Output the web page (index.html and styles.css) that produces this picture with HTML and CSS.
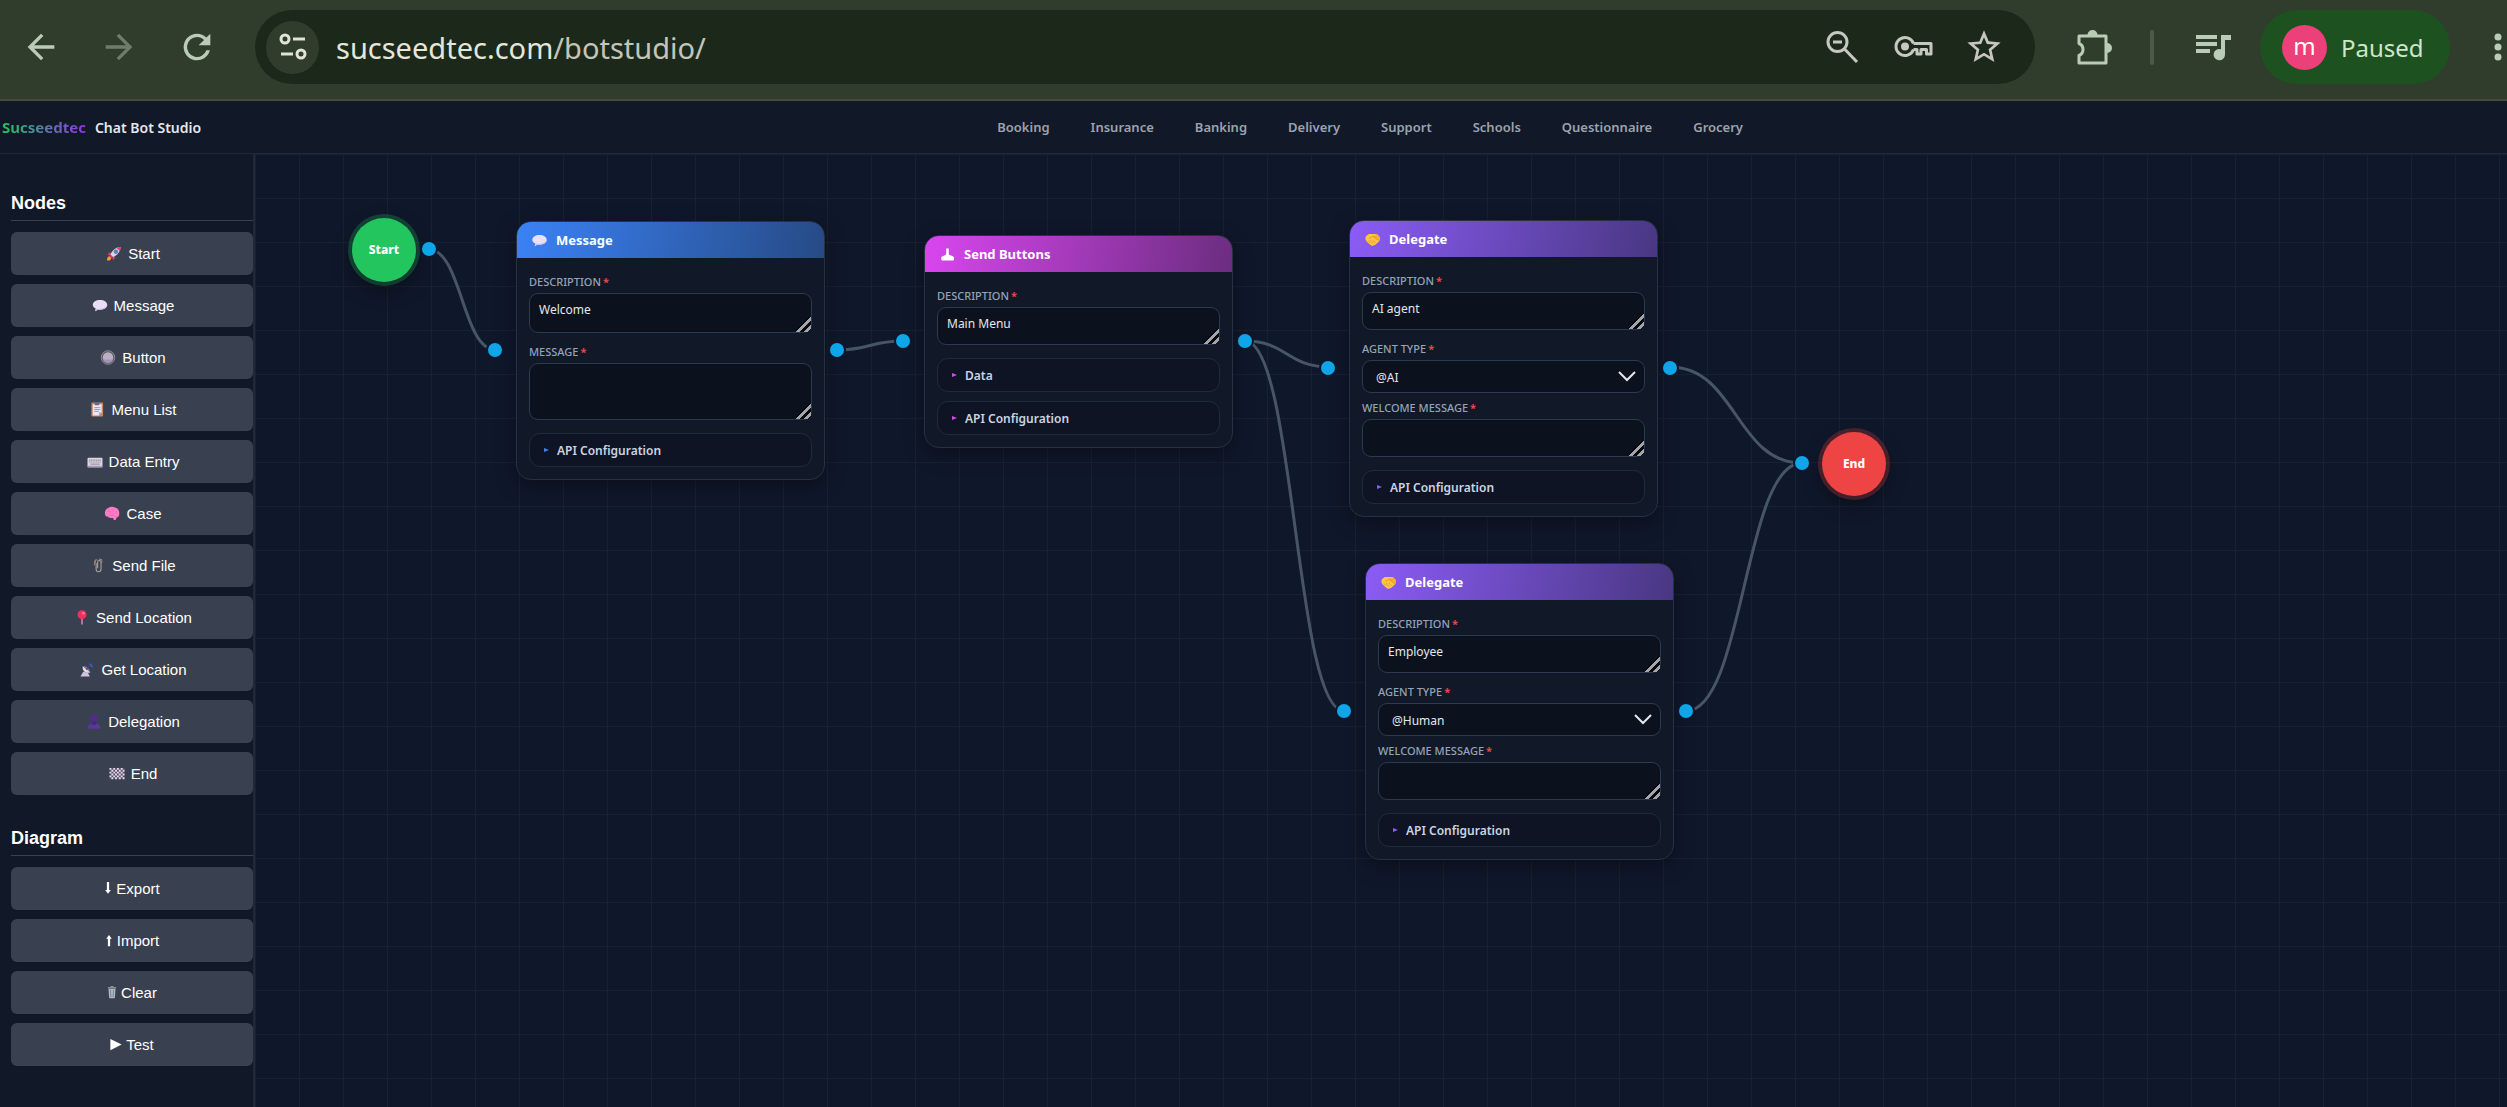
FILE: index.html
```
<!DOCTYPE html>
<html lang="en">
<head>
  <meta charset="UTF-8" />
  <meta name="viewport" content="width=device-width, initial-scale=1" />
  <title>Sucseedtec Chat Bot Studio</title>
  <link rel="stylesheet" href="styles.css">
</head>
<body>
  <!-- icon sprite -->
  <svg class="sprite" aria-hidden="true">
    <symbol id="i-rocket" viewBox="0 0 16 16">
      <path d="M4 6L1 9l3 1zM10 12l-3 3-1-3z" fill="#f0386b"/>
      <path d="M15 1c-5 0-8 3-11 8l3 3c5-3 8-6 8-11z" fill="#dcd3e6"/>
      <path d="M15 1c-2 0-3 .2-4.500.8l3.700 3.700C14.800 4 15 3 15 1z" fill="#f0386b"/>
      <circle cx="10" cy="6" r="2" fill="#3f8ee0" stroke="#6a5a8a" stroke-width=".6"/>
      <path d="M4 9l3 3-2 1-2-2z" fill="#e8306a"/>
      <path d="M3 11l2 2c-.5 2-2 2.500-4.500 2.500C.5 13 1 11.500 3 11z" fill="#ff9a2e"/>
    </symbol>
    <symbol id="i-speech" viewBox="0 0 16 16">
      <path d="M8 2c4.500 0 7.700 2.200 7.700 5.200S12.500 12.500 8 12.500c-.8 0-1.500 0-2.200-.2L3 14.200l.4-2.900C1.500 10.300.3 9 .3 7.200.3 4.200 3.500 2 8 2z" fill="#e9def5"/>
      <path d="M15.700 7.200c0 3-3.200 5.300-7.700 5.300-.8 0-1.500 0-2.200-.2L3 14.200l.4-2.900c4 1 9.600.2 12.300-4.100z" fill="#d3c2e6"/>
    </symbol>
    <symbol id="i-radio" viewBox="0 0 16 16">
      <circle cx="8" cy="8" r="7.200" fill="#5a5560" stroke="#938d99" stroke-width="1"/>
      <circle cx="8" cy="8" r="5.600" fill="#b9b1c2"/>
      <path d="M2.800 10a5.600 5.600 0 0 0 10.400 0z" fill="#a493b8"/>
    </symbol>
    <symbol id="i-clipboard" viewBox="0 0 16 16">
      <rect x="2" y=".5" width="12.500" height="15" rx="1" fill="#c98562"/>
      <path d="M3.500 2.500H13V11l-3 3.500H3.500z" fill="#ece6f4"/>
      <path d="M13 11l-3 3.500V11z" fill="#b9a6d0"/>
      <rect x="5.500" y="0" width="5" height="3.500" rx="1" fill="#6d6678"/>
      <path d="M5 6h6.500M5 8h6.500M5 10h5" stroke="#9d93ad" stroke-width="1"/>
    </symbol>
    <symbol id="i-keyboard" viewBox="0 0 16 16">
      <rect x="0" y="4" width="16" height="10" rx="1" fill="#dcd6e2"/>
      <rect x="0" y="12.500" width="16" height="2" rx="1" fill="#a99abd"/>
      <path d="M1.500 6.500h13M1.500 8.500h13" stroke="#96909d" stroke-width="1.200" stroke-dasharray="1.400 .5"/>
      <path d="M3 10.800h10" stroke="#96909d" stroke-width="1.200"/>
    </symbol>
    <symbol id="i-brain" viewBox="0 0 16 16">
      <path d="M1 10C-.5 7 1 3 4 2c2-1.600 5-1.600 7-.4 3 .4 5 3.400 4.700 6.400.3 2.500-1 4-3 4.400L12 15h-2l-.8-2.300C6 13.500 4 12 3.500 11.200 2.500 11.300 1.500 11 1 10z" fill="#ff7cc6"/>
      <path d="M3 6c1.500-1.500 3-.5 3.500.5M8 3.500c1.500 0 2 1 1.500 2.500M12 5c1 1 1 2.500-.5 3M5 9.500c2 1 4-.5 5 .5M11 11c1 .6 2 .3 2.500-.5" fill="none" stroke="#e860b0" stroke-width=".8"/>
    </symbol>
    <symbol id="i-clips" viewBox="0 0 16 16">
      <path d="M6 5.500V12a2.600 2.600 0 0 0 5.200 0V4.500a1.800 1.800 0 0 0-3.600 0V11" fill="none" stroke="#a8a09b" stroke-width="1.200"/>
      <path d="M4 7.500L5 2.500a1.500 1.500 0 0 1 2.500 0M9 1.200l3 .6v3.500" fill="none" stroke="#8b8480" stroke-width="1.200"/>
      <circle cx="5" cy="4" r="1" fill="#c4805d"/>
    </symbol>
    <symbol id="i-pin" viewBox="0 0 16 16">
      <path d="M8 9v6.500" stroke="#b9aac8" stroke-width="1.400"/>
      <circle cx="8" cy="5" r="4.800" fill="#f0305f"/>
      <circle cx="9.500" cy="3.500" r="1.500" fill="#ff7a98"/>
    </symbol>
    <symbol id="i-dish" viewBox="0 0 16 16">
      <path d="M1 15.500l3-5 5 1 2 4z" fill="#cfc2e0"/>
      <path d="M3.500 4.500c-1 5 3.500 8.500 8 6.500z" fill="#e4dcec"/>
      <path d="M3.500 4.500l8 6.500c-1-4-4-7-8-6.500z" fill="#8f80a8"/>
      <path d="M7 8l4-4" stroke="#4a4560" stroke-width="1.200"/>
      <path d="M10 1.500c2.500 0 4.500 2 4.500 4.500l-2-1-2-2z" fill="#2f63c9"/>
    </symbol>
    <symbol id="i-person" viewBox="0 0 16 16">
      <circle cx="8" cy="5" r="4.600" fill="#4f2f86"/>
      <path d="M.8 15.800c0-3.800 3-5.600 7.200-5.600s7.200 1.800 7.200 5.600z" fill="#5b3796"/>
      <rect x="6" y="8" width="4" height="3.500" fill="#43277a"/>
    </symbol>
    <symbol id="i-flag" viewBox="0 0 16 16">
      <rect y="2" width="16" height="12" fill="#5b5268"/>
      <path d="M0 3h16M0 7h16M0 11h16" stroke="#e3dcea" stroke-width="2" stroke-dasharray="2 2"/>
      <path d="M2 5h14M2 9h14M2 13h14" stroke="#e3dcea" stroke-width="2" stroke-dasharray="2 2"/>
    </symbol>
    <symbol id="i-hands" viewBox="0 0 16 16">
      <path d="M1 4.500L4 2h8.500l3 3c.6 1.800.2 3.600-.7 5.200L11 13.500l-3.500 1.300-3-2L1.300 9.500C.4 7.800.2 6 1 4.500z" fill="#ffc543"/>
      <path d="M12.500 2l3 3c.6 1.800.2 3.600-.7 5.200L8 5z" fill="#f5b02e"/>
      <path d="M4.500 7l3.500-2.500c2 0 3.500 2 5.500 4M3 9l2.500 2.500M5.500 8.500l3 4M8.500 8.500l2.500 3" fill="none" stroke="#e0902c" stroke-width=".8"/>
    </symbol>
    <symbol id="i-pointer" viewBox="0 0 16 16">
      <path d="M6.600 1.500h2.800V8l4.600 2.200c1.600.9 1.400 3.500 0 4.300H2.500C.8 13.700.8 11 2.400 10.200L6.600 8z" fill="#fff"/>
    </symbol>
    <symbol id="i-down" viewBox="0 0 6 16">
      <path d="M1.800 1h2.400v8.500H6l-3 4-3-4h1.800z" fill="#fff"/>
    </symbol>
    <symbol id="i-up" viewBox="0 0 6 16">
      <path d="M1.800 14h2.400V6H6L3 2 0 6h1.800z" fill="#fff"/>
    </symbol>
    <symbol id="i-trash" viewBox="0 0 10 16">
      <path d="M1.300 4h7.400L8 14H2z" fill="#b4bcc0"/>
      <path d="M.6 2.200h8.800v1.600H.6zM3.500 1h3v1.400h-3z" fill="#8a8f94"/>
      <path d="M3.500 5l.3 8M6.500 5l-.3 8" stroke="#5d8a98" stroke-width="1"/>
    </symbol>
    <symbol id="i-play" viewBox="0 0 12 16">
      <path d="M0 2l12 6-12 6z" fill="#fff"/>
    </symbol>
  </svg>

  <div class="browser-bar">
    <button class="bar-btn" aria-label="Back"><svg viewBox="0 0 24 24"><path d="M20 11H7.830l5.590-5.590L12 4l-8 8 8 8 1.410-1.410L7.830 13H20z"/></svg></button>
    <button class="bar-btn dim" aria-label="Forward"><svg viewBox="0 0 24 24"><path d="M12 4l-1.410 1.410L16.170 11H4v2h12.170l-5.580 5.590L12 20l8-8z"/></svg></button>
    <button class="bar-btn" aria-label="Reload"><svg viewBox="0 0 24 24"><path d="M17.650 6.350A7.960 7.960 0 0 0 12 4a8 8 0 1 0 7.730 10h-2.080A6 6 0 1 1 12 6c1.660 0 3.140.69 4.220 1.780L13 11h7V4z"/></svg></button>
    <div class="address">
      <button class="site-info" aria-label="Site information">
        <svg viewBox="0 0 28 28" fill="none" stroke="#dfe4d6" stroke-width="3"><circle cx="6" cy="6" r="4"/><path d="M14 6h12M2 21h12"/><circle cx="22" cy="21" r="4"/></svg>
      </button>
      <div class="url">sucseedtec.com<span>/botstudio/</span></div>
      <button class="bar-btn soft" aria-label="Zoom"><svg viewBox="0 0 40 40" fill="none" stroke="#c6c7c1" stroke-width="3"><circle cx="15.500" cy="15" r="9.500"/><path d="M22 21.500L35 35M11 15h9"/></svg></button>
      <button class="bar-btn soft" aria-label="Passwords"><svg viewBox="0 0 40 40" fill="none" stroke="#c6c7c1" stroke-width="3" stroke-linejoin="round"><path d="M20.500 16.500H38v10.500h-4.500v-4.500H28v4.500h-4v-4.500h-3.500"/><path d="M20.500 16.500a9 9 0 1 0 0 6"/><circle cx="12" cy="19.500" r="4" fill="#c6c7c1" stroke="none"/></svg></button>
      <button class="bar-btn soft" aria-label="Bookmark"><svg viewBox="0 0 24 24"><path d="M22 9.240l-7.190-.62L12 2 9.190 8.630 2 9.240l5.460 4.730L5.820 21 12 17.270 18.180 21l-1.630-7.030zM12 15.400l-3.760 2.270 1-4.280-3.320-2.880 4.380-.38L12 6.100l1.710 4.040 4.380.38-3.320 2.880 1 4.280z"/></svg></button>
    </div>
    <button class="bar-btn ext" aria-label="Extensions"><svg viewBox="0 0 40 40"><path d="M5 9h27v27H5v-7.500a6.500 6.500 0 0 0 0-12z" fill="none" stroke="#b9cdb6" stroke-width="3" stroke-linejoin="round"/><path d="M13.500 8a5 5 0 0 1 10 0zM33 16a5 5 0 0 1 0 10z"/></svg></button>
    <span class="bar-sep"></span>
    <button class="bar-btn media" aria-label="Media"><svg viewBox="0 0 40 40"><path d="M3 8h21v4H3zM3 15h21v4H3zM3 22h14v4H3z"/><path d="M28 8h10v5h-6v14.500a5.700 5.700 0 1 1-4-5.300z"/></svg></button>
    <button class="profile"><span class="avatar">m</span>Paused</button>
    <button class="kebab" aria-label="Menu"><svg viewBox="0 0 8 28"><circle cx="4" cy="4" r="3.500"/><circle cx="4" cy="14" r="3.500"/><circle cx="4" cy="24" r="3.500"/></svg></button>
  </div>

  <header class="topbar">
    <div class="brand"><span class="brand-name">Sucseedtec</span><span>Chat Bot Studio</span></div>
    <nav class="topnav">
      <a href="#">Booking</a>
      <a href="#">Insurance</a>
      <a href="#">Banking</a>
      <a href="#">Delivery</a>
      <a href="#">Support</a>
      <a href="#">Schools</a>
      <a href="#">Questionnaire</a>
      <a href="#">Grocery</a>
    </nav>
  </header>

  <div class="workspace">
    <aside class="sidebar">
      <h3>Nodes</h3>
      <div class="btn-list">
        <button><svg><use href="#i-rocket"/></svg>Start</button>
        <button><svg><use href="#i-speech"/></svg>Message</button>
        <button><svg><use href="#i-radio"/></svg>Button</button>
        <button><svg><use href="#i-clipboard"/></svg>Menu List</button>
        <button><svg><use href="#i-keyboard"/></svg>Data Entry</button>
        <button><svg><use href="#i-brain"/></svg>Case</button>
        <button><svg><use href="#i-clips"/></svg>Send File</button>
        <button><svg><use href="#i-pin"/></svg>Send Location</button>
        <button><svg><use href="#i-dish"/></svg>Get Location</button>
        <button><svg><use href="#i-person"/></svg>Delegation</button>
        <button><svg><use href="#i-flag"/></svg>End</button>
      </div>
      <h3>Diagram</h3>
      <div class="btn-list">
        <button><svg class="w6"><use href="#i-down"/></svg>Export</button>
        <button><svg class="w6"><use href="#i-up"/></svg>Import</button>
        <button><svg class="w10"><use href="#i-trash"/></svg>Clear</button>
        <button><svg class="w12"><use href="#i-play"/></svg>Test</button>
      </div>
    </aside>

    <main class="canvas">
      <svg class="links">
        <path d="M173 95C207 95 207 196 241 196"/>
        <path d="M582 196C615 196 615 187 648 187"/>
        <path d="M990 187C1032 187 1032 213 1074 213"/>
        <path d="M990 187C1040 187 1040 557 1089 557"/>
        <path d="M1415 213C1481 213 1481 309 1547 309"/>
        <path d="M1431 557C1489 557 1489 309 1547 309"/>
      </svg>

      <div class="node circle start" id="n-start">Start<i class="port out"></i></div>

      <section class="node card message" id="n-message">
        <h4><svg><use href="#i-speech"/></svg>Message</h4>
        <div class="card-body">
          <div class="field">
            <label for="msg-desc">DESCRIPTION<b>*</b></label>
            <textarea id="msg-desc" class="mid">Welcome</textarea>
          </div>
          <div class="field">
            <label for="msg-text">MESSAGE<b>*</b></label>
            <textarea id="msg-text" class="tall"></textarea>
          </div>
          <details><summary>API Configuration</summary></details>
        </div>
        <i class="port in"></i><i class="port out"></i>
      </section>

      <section class="node card buttons" id="n-buttons">
        <h4><svg><use href="#i-pointer"/></svg>Send Buttons</h4>
        <div class="card-body">
          <div class="field">
            <label for="btn-desc">DESCRIPTION<b>*</b></label>
            <textarea id="btn-desc">Main Menu</textarea>
          </div>
          <details><summary>Data</summary></details>
          <details><summary>API Configuration</summary></details>
        </div>
        <i class="port in"></i><i class="port out"></i>
      </section>

      <section class="node card delegate" id="n-ai">
        <h4><svg><use href="#i-hands"/></svg>Delegate</h4>
        <div class="card-body">
          <div class="field">
            <label for="ai-desc">DESCRIPTION<b>*</b></label>
            <textarea id="ai-desc">AI agent</textarea>
          </div>
          <div class="field pick">
            <label for="ai-type">AGENT TYPE<b>*</b></label>
            <div class="select-wrap">
              <select id="ai-type"><option>@AI</option><option>@Human</option></select>
              <svg viewBox="0 0 20 12"><path d="M2 2l8 8 8-8"/></svg>
            </div>
          </div>
          <div class="field">
            <label for="ai-welcome">WELCOME MESSAGE<b>*</b></label>
            <textarea id="ai-welcome"></textarea>
          </div>
          <details><summary>API Configuration</summary></details>
        </div>
        <i class="port in"></i><i class="port out"></i>
      </section>

      <section class="node card delegate" id="n-human">
        <h4><svg><use href="#i-hands"/></svg>Delegate</h4>
        <div class="card-body">
          <div class="field">
            <label for="hu-desc">DESCRIPTION<b>*</b></label>
            <textarea id="hu-desc">Employee</textarea>
          </div>
          <div class="field pick">
            <label for="hu-type">AGENT TYPE<b>*</b></label>
            <div class="select-wrap">
              <select id="hu-type"><option>@AI</option><option selected>@Human</option></select>
              <svg viewBox="0 0 20 12"><path d="M2 2l8 8 8-8"/></svg>
            </div>
          </div>
          <div class="field">
            <label for="hu-welcome">WELCOME MESSAGE<b>*</b></label>
            <textarea id="hu-welcome"></textarea>
          </div>
          <details><summary>API Configuration</summary></details>
        </div>
        <i class="port in"></i><i class="port out"></i>
      </section>

      <div class="node circle end" id="n-end">End<i class="port in"></i></div>
    </main>
  </div>
</body>
</html>
```
FILE: styles.css
```
* {
  box-sizing: border-box;
}
body {
  margin: 0;
  min-height: 100vh;
  display: flex;
  flex-direction: column;
  background: #0f172a;
  color: #fff;
  font-family: 'Noto Sans', 'Open Sans', sans-serif;
}
button {
  font: inherit;
  color: inherit;
  border: 0;
  padding: 0;
  background: none;
  cursor: pointer;
}
.sprite {
  position: absolute;
  width: 0;
  height: 0;
}

/* browser bar */
.browser-bar {
  display: flex;
  align-items: center;
  height: 101px;
  padding: 0 0 5px 21px;
  background: #303d2d;
  border-bottom: 2px solid #434c40;
}
.bar-btn {
  flex: none;
  width: 40px;
  height: 40px;
  margin-right: 38px;
  fill: #b9cdb6;
}
.bar-btn svg {
  display: block;
  width: 40px;
  height: 40px;
}
.bar-btn.dim {
  fill: #6f7c6b;
}
.bar-btn.soft {
  fill: #c6c7c1;
  margin-right: 31px;
}
.bar-btn.ext {
  margin-right: 36px;
}
.bar-btn.media {
  margin-right: 27px;
}
.address {
  flex: 1;
  display: flex;
  align-items: center;
  height: 74px;
  margin-right: 39px;
  padding-left: 11px;
  border-radius: 37px;
  background: #1c291a;
}
.site-info {
  display: flex;
  align-items: center;
  justify-content: center;
  width: 53px;
  height: 53px;
  border-radius: 50%;
  background: #303d2d;
}
.site-info svg {
  width: 28px;
  height: 28px;
}
.url {
  flex: 1;
  padding-left: 17px;
  font-size: 29px;
  color: #e4e6dc;
}
.url span {
  color: #c3c5bc;
}
.bar-sep {
  width: 4px;
  height: 35px;
  margin-right: 39px;
  border-radius: 2px;
  background: #4b5a48;
}
.profile {
  display: flex;
  align-items: center;
  gap: 14px;
  width: 190px;
  height: 74px;
  padding-left: 22px;
  border-radius: 37px;
  background: #1e5120;
  color: #cfe6c8;
  font-size: 24px;
}
.avatar {
  width: 45px;
  height: 45px;
  line-height: 42px;
  border-radius: 50%;
  background: #ec407a;
  color: #fff;
}
.kebab {
  width: 57px;
  padding-left: 44px;
  fill: #b9cdb6;
}
.kebab svg {
  display: block;
  width: 8px;
  height: 28px;
}

/* app header */
.topbar {
  display: flex;
  align-items: center;
  gap: 32px;
  height: 53px;
  padding-left: 2px;
  background: #111827;
  border-bottom: 1px solid #1f2937;
}
.brand {
  display: flex;
  align-items: baseline;
  gap: 9px;
  font-size: 14px;
  font-weight: 600;
  color: #e5e7eb;
}
.brand-name {
  font-size: 15px;
  font-weight: 700;
  background: linear-gradient(90deg, #22c55e, #9333ea);
  -webkit-background-clip: text;
  background-clip: text;
  color: transparent;
}
.topnav {
  flex: 1;
  display: flex;
  justify-content: center;
  gap: 41px;
}
.topnav a {
  color: #9ca3af;
  font-size: 13px;
  font-weight: 600;
  text-decoration: none;
}

/* layout */
.workspace {
  flex: 1;
  display: flex;
}
.sidebar {
  width: 255px;
  padding: 38px 0 0 11px;
  background: #111827;
  border-right: 2px solid #1f2937;
  font-family: 'Liberation Sans', Arial, sans-serif;
}
.sidebar h3 {
  margin: 0 0 11px;
  padding-bottom: 5px;
  border-bottom: 1px solid #374151;
  font-size: 18px;
  line-height: 23px;
}
.btn-list {
  display: flex;
  flex-direction: column;
  gap: 9px;
  margin-bottom: 32px;
}
.btn-list:last-child {
  margin-bottom: 0;
}
.btn-list button {
  display: flex;
  align-items: center;
  justify-content: center;
  gap: 4px;
  height: 43px;
  border-radius: 6px;
  background: #394150;
  font-size: 15px;
}
.btn-list svg {
  width: 20px;
  height: 15px;
}
.btn-list .w6 {
  width: 8px;
}
.btn-list .w10 {
  width: 10px;
}
.btn-list .w12 {
  width: 12px;
}

/* canvas */
.canvas {
  flex: 1;
  position: relative;
  overflow: hidden;
  background-color: #0f172a;
  background-image:
    linear-gradient(#17212f 1px, transparent 1px),
    linear-gradient(90deg, #17212f 1px, transparent 1px);
  background-size: 44px 44px;
}
.links {
  position: absolute;
  inset: 0;
  width: 100%;
  height: 100%;
}
.links path {
  fill: none;
  stroke: #475569;
  stroke-width: 3;
}
.node {
  position: absolute;
}
#n-start { left: 97px; top: 64px; }
#n-message { left: 261px; top: 67px; }
#n-buttons { left: 669px; top: 81px; }
#n-ai { left: 1094px; top: 66px; }
#n-human { left: 1110px; top: 409px; }
#n-end { left: 1567px; top: 278px; }

.port {
  position: absolute;
  top: 50%;
  width: 18px;
  height: 18px;
  margin-top: -10px;
  border: 2px solid #0f172a;
  border-radius: 50%;
  background: #0ea5e9;
}
.port.in {
  left: -31px;
}
.port.out {
  right: -22px;
}
.circle {
  width: 64px;
  height: 64px;
  line-height: 64px;
  border-radius: 50%;
  text-align: center;
  font-size: 12px;
  font-weight: 800;
}
.circle .port.in {
  left: -29px;
}
.circle.start {
  background: #22c55e;
  box-shadow: 0 0 0 4px rgba(34, 197, 94, 0.25), 0 8px 20px rgba(0, 0, 0, 0.4);
}
.circle.end {
  background: #ef4444;
  box-shadow: 0 0 0 4px rgba(239, 68, 68, 0.25), 0 8px 20px rgba(0, 0, 0, 0.4);
}

.card {
  width: 309px;
  border: 1px solid #243244;
  border-radius: 15px;
  background: #111827;
  box-shadow: 0 6px 20px rgba(0, 0, 0, 0.35);
}
.card.message { --accent: #3b82f6; --accent-end: #264a85; }
.card.buttons { --accent: #d946ef; --accent-end: #6b2d80; }
.card.delegate { --accent: #8b5cf6; --accent-end: #493782; }

.card h4 {
  display: flex;
  align-items: center;
  gap: 9px;
  height: 36px;
  margin: 0;
  padding-left: 15px;
  border-radius: 14px 14px 0 0;
  background: linear-gradient(100deg, var(--accent), var(--accent-end));
  font-size: 13px;
  font-weight: 700;
}
.card h4 svg {
  width: 15px;
  height: 15px;
}
.card-body {
  padding: 16px 12px 12px;
}
.field {
  margin-bottom: 11px;
}
.field.pick {
  margin-bottom: 7px;
}
.field label {
  display: block;
  margin-bottom: 3px;
  color: #94a3b8;
  font-size: 11px;
  font-weight: 500;
  line-height: 16px;
}
.field label b {
  margin-left: 2px;
  color: #ef4444;
}
textarea,
select {
  display: block;
  width: 100%;
  border: 1px solid #2b3a4e;
  border-radius: 9px;
  background: #0b121e;
  color: #e5e7eb;
  font-family: inherit;
  font-size: 12px;
}
textarea {
  height: 38px;
  padding: 8px 9px;
  line-height: 16px;
  overflow: hidden;
  resize: vertical;
}
textarea::-webkit-resizer {
  background: linear-gradient(135deg, transparent 42%, #05080e 42%, #05080e 48%, #a3a5a8 48%, #a3a5a8 62%, #05080e 62%, #05080e 74%, #a3a5a8 74%, #a3a5a8 88%, transparent 88%);
}
textarea.mid {
  height: 40px;
}
textarea.tall {
  height: 57px;
}
.select-wrap {
  position: relative;
}
select {
  height: 33px;
  padding: 2px 13px 0;
  appearance: none;
}
.select-wrap svg {
  position: absolute;
  right: 8px;
  top: 10px;
  width: 20px;
  height: 12px;
  fill: none;
  stroke: #e5e7eb;
  stroke-width: 2;
  pointer-events: none;
}
details {
  border: 1px solid #1f2b3d;
  border-radius: 11px;
  background: #0f1425;
}
.field + details {
  margin-top: 13px;
}
details + details {
  margin-top: 9px;
}
summary {
  display: flex;
  align-items: center;
  gap: 8px;
  height: 32px;
  padding-left: 14px;
  color: #cbd5e1;
  font-size: 12px;
  font-weight: 600;
}
summary::before {
  content: '';
  border-left: 5px solid var(--accent);
  border-top: 2px solid transparent;
  border-bottom: 2px solid transparent;
}
```
